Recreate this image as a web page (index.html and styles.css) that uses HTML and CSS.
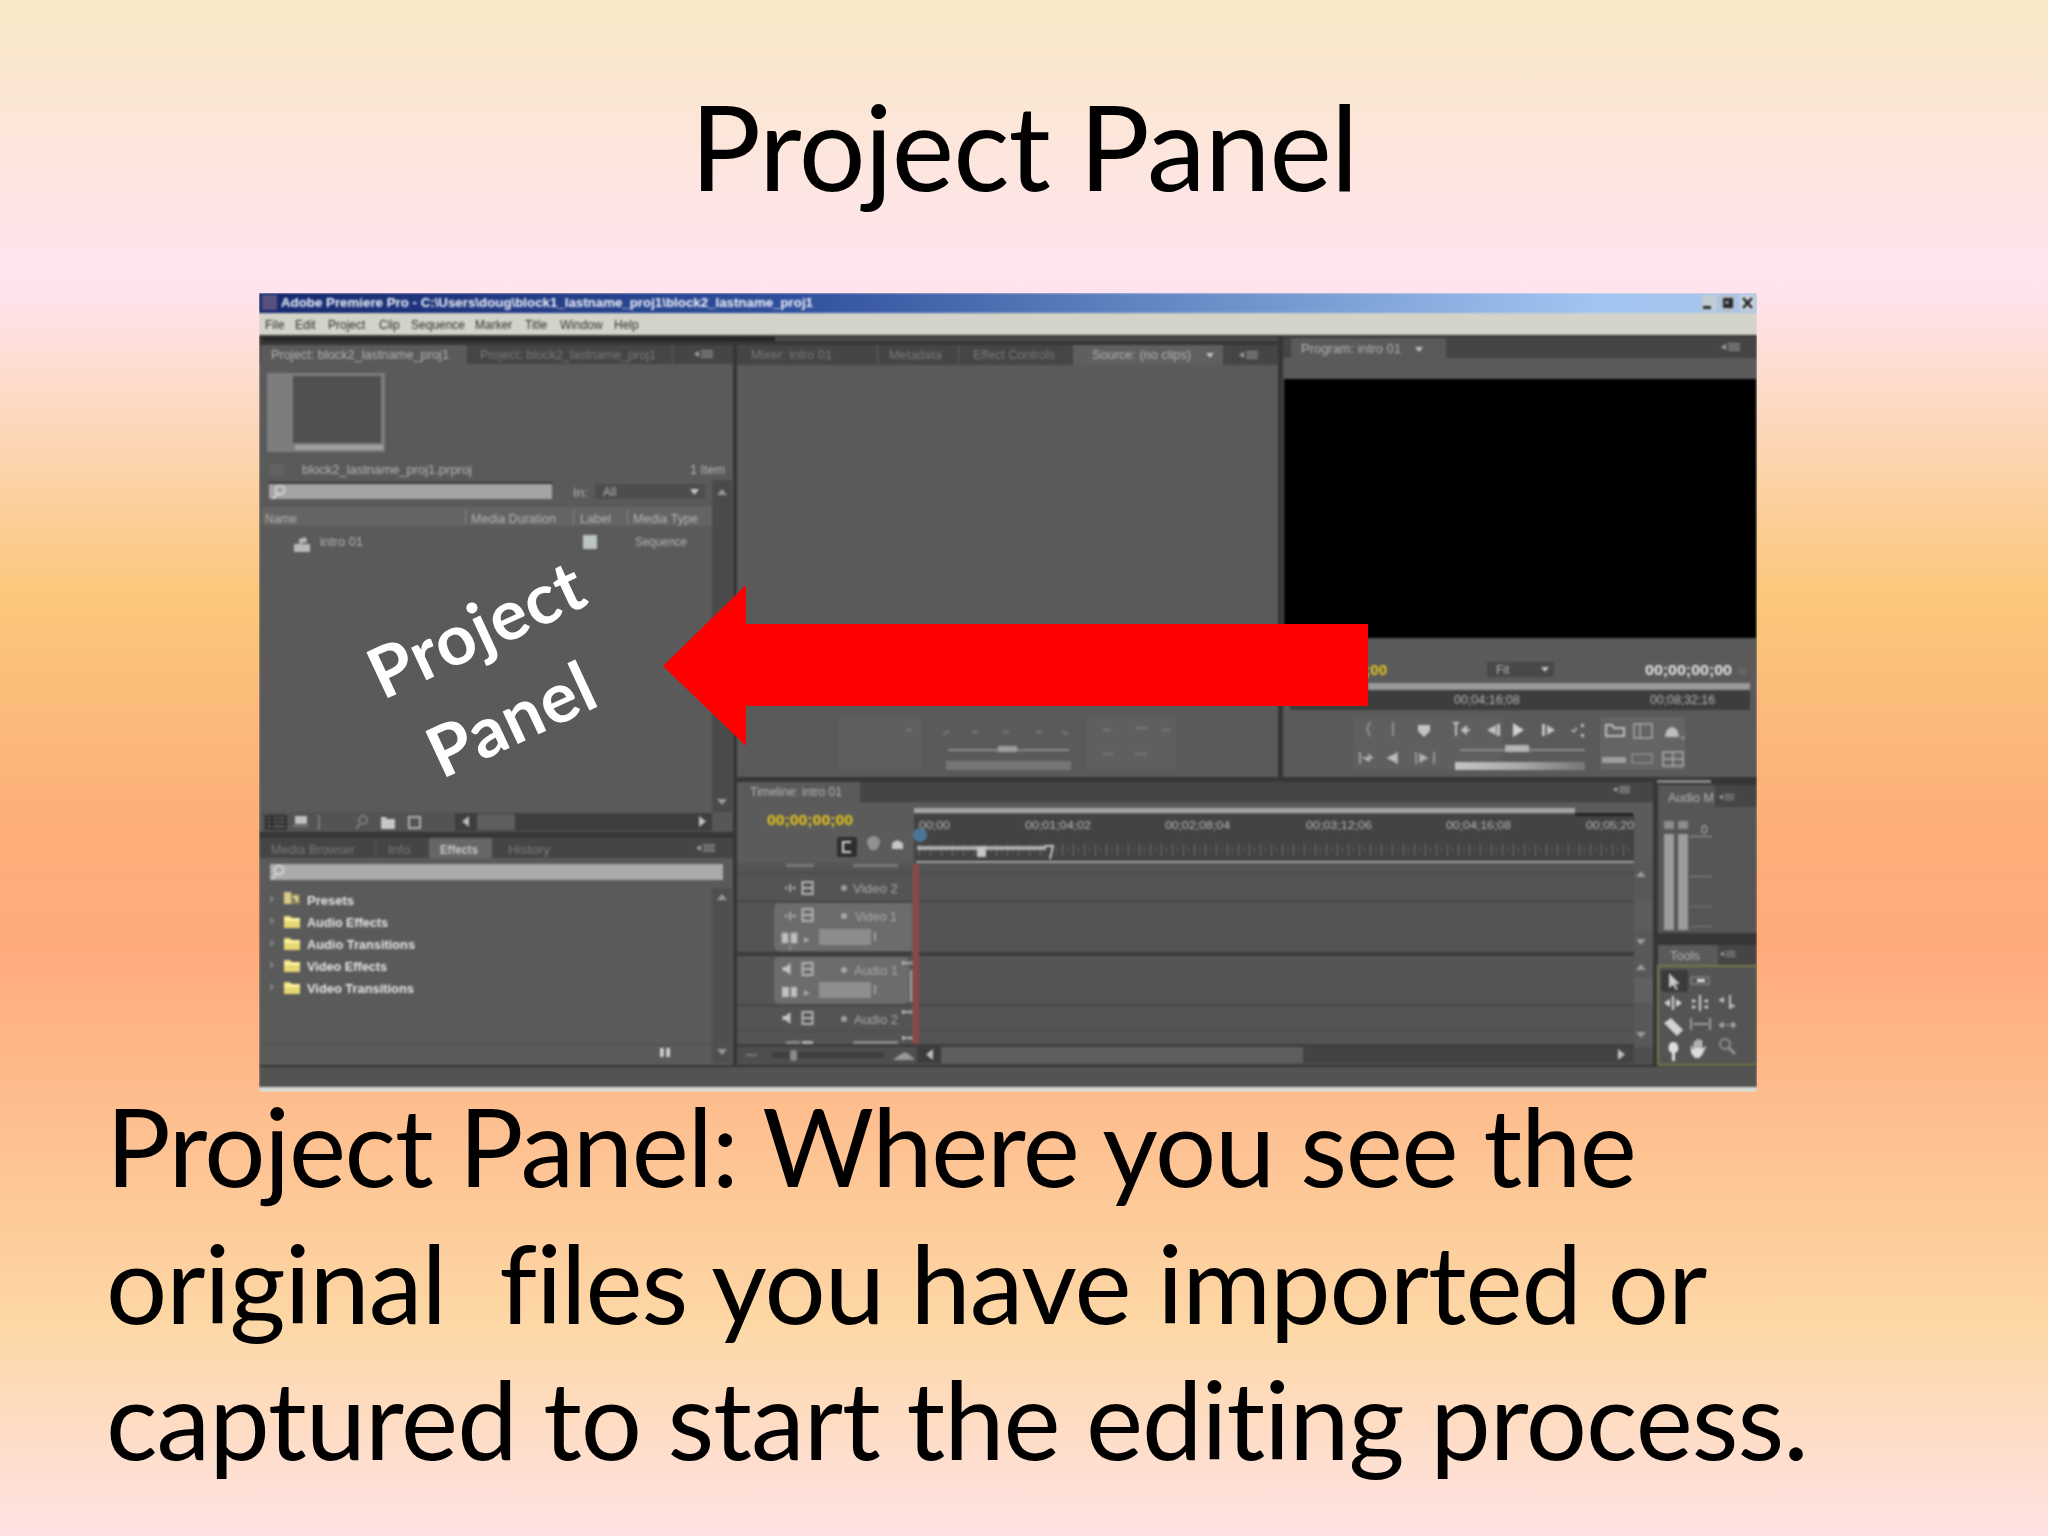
FILE: index.html
```html
<!DOCTYPE html>
<html lang="en">
<head>
<meta charset="utf-8">
<title>Project Panel</title>
<link rel="stylesheet" href="styles.css">
</head>
<body>
<main class="slide">
  <h1 class="slide-title">Project Panel</h1>
  <figure class="shot">
    <svg class="shot-svg" viewBox="259 293 1498 799" width="1498" height="799" xmlns="http://www.w3.org/2000/svg" role="img" aria-label="Adobe Premiere Pro workspace">
      <defs>
        <linearGradient id="titlebar" x1="0" x2="1" y1="0" y2="0">
          <stop offset="0" stop-color="#16296f"/>
          <stop offset="0.35" stop-color="#2f4f9c"/>
          <stop offset="0.6" stop-color="#6288c4"/>
          <stop offset="0.9" stop-color="#a3c6f2"/>
          <stop offset="1" stop-color="#a8c4e8"/>
        </linearGradient>
        <linearGradient id="shuttle" x1="0" x2="1" y1="0" y2="0">
          <stop offset="0" stop-color="#c4c4c4"/>
          <stop offset="0.5" stop-color="#a8a8a8"/>
          <stop offset="1" stop-color="#767676"/>
        </linearGradient>
        <pattern id="ticks" x="919" y="840" width="11" height="20" patternUnits="userSpaceOnUse">
          <rect x="0" y="4" width="1" height="12" fill="#707070"/>
          <rect x="5" y="7" width="1" height="6" fill="#5e5e5e"/>
        </pattern>
        <symbol id="folder" viewBox="0 0 18 16">
          <path d="M1 3h6l2 2h8v10H1z" fill="#e6d873"/>
          <path d="M1 5h16v3H1z" fill="#fff3a0"/>
        </symbol>
        <symbol id="presets" viewBox="0 0 18 16">
          <path d="M1 2h7v12H1z" fill="#d8cc88"/>
          <path d="M8 4h9v10H8z" fill="#8c8458"/>
          <path d="M10 6h5v6h-2V8h-3z" fill="#e8e2b4"/>
        </symbol>
        <symbol id="up" viewBox="0 0 12 8"><path d="M6 1l5 6H1z" fill="#9a9a9a"/></symbol>
        <symbol id="down" viewBox="0 0 12 8"><path d="M6 7L1 1h10z" fill="#9a9a9a"/></symbol>
        <symbol id="speaker" viewBox="0 0 14 14"><path d="M1 5h3l5-4v12L4 9H1z" fill="#c4c4c4"/></symbol>
        <symbol id="eye" viewBox="0 0 14 14"><path d="M1 7l3-2v4zM6 3h2v8H6zM9 6h4v2H9z" fill="#aaa"/></symbol>
        <symbol id="film" viewBox="0 0 12 14"><path d="M1 1h10v12H1z" fill="none" stroke="#b4b4b4" stroke-width="2"/><path d="M1 7h10" stroke="#b4b4b4" stroke-width="2"/></symbol>
        <symbol id="menu" viewBox="0 0 22 12"><path d="M1 6l5-3v6z" fill="#a0a0a0"/><path d="M8 2h12v2H8zM8 5h12v2H8zM8 8h12v2H8z" fill="#7e7e7e"/></symbol>
      </defs>

      <g class="soft">
        <!-- window chrome -->
        <rect class="bg-dark" x="259" y="293" width="1498" height="799"/>
        <rect x="259" y="293" width="1498" height="20" fill="url(#titlebar)"/>
        <rect x="262" y="295" width="15" height="15" fill="#59507f"/>
        <text class="t-title" x="281" y="307" textLength="532" lengthAdjust="spacingAndGlyphs">Adobe Premiere Pro - C:\Users\doug\block1_lastname_proj1\block2_lastname_proj1</text>
        <rect x="1702" y="295" width="15" height="16" fill="#c4ccd4"/>
        <rect x="1703" y="306" width="8" height="3" fill="#2a2a2a"/>
        <rect x="1720" y="295" width="15" height="16" fill="#b8c2cc"/>
        <rect x="1723" y="298" width="10" height="10" fill="#262626"/>
        <rect x="1725" y="301" width="4" height="3" fill="#8a939c"/>
        <rect x="1740" y="295" width="15" height="16" fill="#ccd4dc"/>
        <path d="M1743 298l9 10M1752 298l-9 10" stroke="#1c1c1c" stroke-width="2.500"/>
        <rect class="bg-menu" x="259" y="313" width="1498" height="22"/>
        <g class="t-menu">
          <text x="265" y="329">File</text>
          <text x="295" y="329">Edit</text>
          <text x="328" y="329">Project</text>
          <text x="379" y="329">Clip</text>
          <text x="411" y="329">Sequence</text>
          <text x="475" y="329">Marker</text>
          <text x="525" y="329">Title</text>
          <text x="560" y="329">Window</text>
          <text x="614" y="329">Help</text>
        </g>
        <rect x="262" y="337" width="513" height="4" fill="#262626"/>
        <rect x="775" y="337" width="503" height="4" fill="#4a4a4a"/>

        <!-- project panel -->
        <rect class="bg-panel" x="259" y="345" width="474" height="487"/>
        <rect class="bg-tabs" x="259" y="345" width="474" height="19"/>
        <rect class="bg-panel" x="261" y="345" width="206" height="19"/>
        <text class="t-mid" x="271" y="359" textLength="178" lengthAdjust="spacingAndGlyphs">Project: block2_lastname_proj1</text>
        <text class="t-dim" x="480" y="359" textLength="176" lengthAdjust="spacingAndGlyphs">Project: block2_lastname_proj1</text>
        <rect x="672" y="345" width="1" height="19" fill="#5c5c5c"/>
        <use href="#menu" x="693" y="348" width="22" height="12"/>
        <rect x="267" y="373" width="118" height="79" fill="#7d7d7d"/>
        <rect x="293" y="376" width="88" height="67" fill="#505050"/>
        <rect x="295" y="445" width="88" height="5" fill="#a0a0a0"/>
        <rect x="270" y="464" width="14" height="12" fill="#626262"/>
        <text class="t-mid" x="302" y="474" textLength="170" lengthAdjust="spacingAndGlyphs">block2_lastname_proj1.prproj</text>
        <text class="t-mid" x="690" y="474" textLength="35" lengthAdjust="spacingAndGlyphs">1 Item</text>
        <rect x="269" y="482" width="284" height="2" fill="#383838"/>
        <rect x="269" y="484" width="283" height="15" fill="#a4a4a4"/>
        <circle cx="280" cy="490" r="4.500" fill="none" stroke="#e0e0e0" stroke-width="1.500"/>
        <path d="M277 494l-4 5" stroke="#e0e0e0" stroke-width="1.500"/>
        <text class="t-mid" x="573" y="497" textLength="15" lengthAdjust="spacingAndGlyphs">In:</text>
        <rect x="595" y="484" width="110" height="15" fill="#4d4d4d"/>
        <text class="t-mid" x="603" y="496">All</text>
        <path d="M690 489h9l-4.500 6z" fill="#c8c8c8"/>
        <rect x="712" y="480" width="20" height="332" fill="#4a4a4a"/>
        <use href="#up" x="716" y="488" width="12" height="8"/>
        <use href="#down" x="716" y="798" width="12" height="8"/>
        <rect x="262" y="507" width="450" height="19" fill="#646464"/>
        <text class="t-mid" x="265" y="523">Name</text>
        <rect x="465" y="510" width="1" height="14" fill="#8a8a8a"/>
        <text class="t-mid" x="471" y="523" textLength="85" lengthAdjust="spacingAndGlyphs">Media Duration</text>
        <rect x="573" y="510" width="1" height="14" fill="#8a8a8a"/>
        <text class="t-mid" x="580" y="523" textLength="31" lengthAdjust="spacingAndGlyphs">Label</text>
        <rect x="627" y="510" width="1" height="14" fill="#8a8a8a"/>
        <text class="t-mid" x="633" y="523" textLength="65" lengthAdjust="spacingAndGlyphs">Media Type</text>
        <path d="M294 544h16v8h-16zM299 539l7-2 1 5-8 2z" fill="#b8b8b8"/>
        <text class="t-mid" x="320" y="546" textLength="43" lengthAdjust="spacingAndGlyphs">intro 01</text>
        <rect x="583" y="535" width="14" height="14" fill="#bcc5c1"/>
        <text class="t-mid" x="635" y="546" textLength="52" lengthAdjust="spacingAndGlyphs">Sequence</text>

        <!-- project toolbar -->
        <rect x="262" y="812" width="193" height="20" fill="#535353"/>
        <path d="M266 816h20v13h-20z M266 820h20 M266 824h20 M272 816v13" fill="none" stroke="#262626" stroke-width="1.500"/>
        <rect x="295" y="816" width="12" height="8" fill="#c0c0c0"/>
        <rect x="293" y="825" width="16" height="2" fill="#777"/>
        <rect x="318" y="815" width="2" height="15" fill="#7a7a7a"/>
        <circle cx="363" cy="820" r="4" fill="none" stroke="#8a8a8a" stroke-width="1.500"/>
        <path d="M360 824l-4 5" stroke="#8a8a8a" stroke-width="1.500"/>
        <path d="M381 817h5l1 2h8v10h-14z" fill="#c8c8c8"/>
        <rect x="409" y="817" width="11" height="11" fill="none" stroke="#b0b0b0" stroke-width="2"/>
        <rect x="455" y="813" width="257" height="18" fill="#3e3e3e"/>
        <path d="M469 816v11l-7-5.500z" fill="#bdbdbd"/>
        <rect x="477" y="814" width="38" height="16" fill="#5e5e5e"/>
        <path d="M699 816v11l7-5.500z" fill="#c0c0c0"/>
        <rect x="712" y="812" width="21" height="20" fill="#575757"/>

        <!-- effects panel -->
        <rect class="bg-panel" x="259" y="838" width="474" height="227"/>
        <rect class="bg-tabs" x="259" y="838" width="474" height="20"/>
        <text class="t-dim" x="271" y="854" textLength="84" lengthAdjust="spacingAndGlyphs">Media Browser</text>
        <rect x="375" y="840" width="1" height="18" fill="#5d5d5d"/>
        <text class="t-dim" x="388" y="854" textLength="22" lengthAdjust="spacingAndGlyphs">Info</text>
        <rect x="429" y="838" width="63" height="20" fill="#666"/>
        <text class="t-bright" x="440" y="854" textLength="38" lengthAdjust="spacingAndGlyphs">Effects</text>
        <text class="t-dim" x="508" y="854" textLength="42" lengthAdjust="spacingAndGlyphs">History</text>
        <use href="#menu" x="695" y="842" width="22" height="12"/>
        <rect x="270" y="864" width="453" height="16" fill="#ababab"/>
        <circle cx="279" cy="870" r="4.500" fill="none" stroke="#e0e0e0" stroke-width="1.500"/>
        <path d="M276 874l-4 5" stroke="#e0e0e0" stroke-width="1.500"/>
        <rect x="712" y="888" width="20" height="175" fill="#4f4f4f"/>
        <use href="#up" x="716" y="893" width="12" height="8"/>
        <use href="#down" x="716" y="1048" width="12" height="8"/>
        <path d="M270 895l5 4-5 4zM270 917l5 4-5 4zM270 939l5 4-5 4zM270 961l5 4-5 4zM270 983l5 4-5 4z" fill="#7c7c7c"/>
        <use href="#presets" x="283" y="890" width="18" height="16"/>
        <use href="#folder" x="283" y="913" width="18" height="16"/>
        <use href="#folder" x="283" y="935" width="18" height="16"/>
        <use href="#folder" x="283" y="957" width="18" height="16"/>
        <use href="#folder" x="283" y="979" width="18" height="16"/>
        <g class="t-tree">
          <text x="307" y="905" textLength="47" lengthAdjust="spacingAndGlyphs">Presets</text>
          <text x="307" y="927" textLength="81" lengthAdjust="spacingAndGlyphs">Audio Effects</text>
          <text x="307" y="949" textLength="108" lengthAdjust="spacingAndGlyphs">Audio Transitions</text>
          <text x="307" y="971" textLength="80" lengthAdjust="spacingAndGlyphs">Video Effects</text>
          <text x="307" y="993" textLength="107" lengthAdjust="spacingAndGlyphs">Video Transitions</text>
        </g>
        <rect x="262" y="1044" width="450" height="1" fill="#4e4e4e"/>
        <path d="M660 1048h10v9h-10z" fill="#d0d0d0"/>
        <rect x="664" y="1048" width="2" height="9" fill="#444"/>

        <!-- source panel -->
        <rect class="bg-panel" x="737" y="345" width="541" height="432"/>
        <rect class="bg-tabs" x="737" y="345" width="541" height="20"/>
        <text class="t-dim" x="751" y="359" textLength="81" lengthAdjust="spacingAndGlyphs">Mixer: intro 01</text>
        <rect x="877" y="346" width="1" height="18" fill="#5f5f5f"/>
        <text class="t-dim" x="889" y="359" textLength="53" lengthAdjust="spacingAndGlyphs">Metadata</text>
        <rect x="958" y="346" width="1" height="18" fill="#5f5f5f"/>
        <text class="t-dim" x="973" y="359" textLength="82" lengthAdjust="spacingAndGlyphs">Effect Controls</text>
        <rect x="1073" y="345" width="150" height="20" fill="#5f5f5f"/>
        <text class="t-mid" x="1092" y="359" textLength="99" lengthAdjust="spacingAndGlyphs">Source: (no clips)</text>
        <path d="M1206 353h8l-4 5z" fill="#c4c4c4"/>
        <use href="#menu" x="1238" y="349" width="22" height="12"/>
        <rect x="839" y="717" width="82" height="52" fill="#5f5f5f"/>
        <rect x="1087" y="717" width="89" height="52" fill="#5f5f5f"/>
        <path d="M943 734l6-3M972 732h6M1003 732h6M1036 732h6M1062 731l6 4M1103 730h8M1135 728h12M1162 730h8M1103 754h10M1135 754h12M906 730h6" stroke="#717171" stroke-width="3"/>
        <rect x="948" y="749" width="121" height="2" fill="#8a8a8a"/>
        <rect x="998" y="746" width="19" height="6" fill="#9e9e9e"/>
        <rect x="946" y="761" width="125" height="9" fill="#757575"/>

        <!-- program panel -->
        <rect class="bg-panel" x="1283" y="337" width="474" height="440"/>
        <rect class="bg-tabs" x="1283" y="337" width="474" height="21"/>
        <rect class="bg-panel" x="1291" y="338" width="155" height="20"/>
        <text class="t-mid" x="1301" y="353" textLength="100" lengthAdjust="spacingAndGlyphs">Program: intro 01</text>
        <path d="M1415 347h8l-4 5z" fill="#c4c4c4"/>
        <use href="#menu" x="1720" y="341" width="22" height="12"/>
        <rect x="1284" y="379" width="472" height="259" fill="#000"/>
        <text class="t-yellow t-end" x="1387" y="675">00;00;00;00</text>
        <rect x="1487" y="662" width="67" height="15" fill="#484848"/>
        <text class="t-mid" x="1496" y="674">Fit</text>
        <path d="M1541 667h8l-4 5z" fill="#c4c4c4"/>
        <text class="t-time" x="1645" y="675" textLength="87" lengthAdjust="spacingAndGlyphs">00;00;00;00</text>
        <text class="t-dim" x="1739" y="674">u</text>
        <rect x="1368" y="683" width="382" height="7" fill="#999"/>
        <rect x="1290" y="690" width="460" height="20" fill="#3d3d3d"/>
        <text class="t-mid" x="1454" y="704" textLength="66" lengthAdjust="spacingAndGlyphs">00;04;16;08</text>
        <text class="t-mid" x="1650" y="704" textLength="65" lengthAdjust="spacingAndGlyphs">00;08;32;16</text>
        <rect x="1353" y="717" width="150" height="53" fill="#5f5f5f"/>
        <rect x="1600" y="717" width="85" height="53" fill="#646464"/>
        <path d="M1370 722l-3 7 3 7M1393 722v14" fill="none" stroke="#909090" stroke-width="2"/>
        <path d="M1418 725h12v6l-6 6-6-6z" fill="#c4c4c4"/>
        <path d="M1453 723h6M1456 723v13M1462 730h8M1462 730l4-3v6z" fill="none" stroke="#c0c0c0" stroke-width="2"/>
        <path d="M1496 725v10l-9-5zM1497 724h3v12h-3z" fill="#c4c4c4"/>
        <path d="M1513 723v14l11-7z" fill="#cfcfcf"/>
        <path d="M1542 724h3v12h-3zM1547 725v10l8-5z" fill="#c4c4c4"/>
        <path d="M1570 730h8l-3-3v6zM1581 724h3v3h-3zM1581 734h3v3h-3z" fill="#c0c0c0"/>
        <path d="M1606 725h6l2 3h10v8h-18z" fill="none" stroke="#bcbcbc" stroke-width="2"/>
        <path d="M1634 724h18v14h-18zM1640 724v14" fill="none" stroke="#a8a8a8" stroke-width="1.500"/>
        <path d="M1665 737a7 10 0 0 1 14 0z" fill="#bdbdbd"/>
        <circle cx="1683" cy="738" r="2" fill="#8c8c8c"/>
        <path d="M1360 752v12M1364 758h8l-3-3v6zM1388 758l8-4v8zM1397 752v12" fill="#c4c4c4" stroke="#b8b8b8" stroke-width="1.500"/>
        <path d="M1416 752v12M1420 754v8l7-4zM1434 752v12" fill="#b8b8b8" stroke="#aaa" stroke-width="1.500"/>
        <rect x="1460" y="749" width="125" height="2" fill="#8b8b8b"/>
        <rect x="1505" y="745" width="24" height="7" fill="#b4b4b4"/>
        <rect x="1455" y="762" width="130" height="8" fill="url(#shuttle)"/>
        <path d="M1602 757h24v6h-24z" fill="#a0a0a0"/>
        <path d="M1632 754h20v9h-20z" fill="none" stroke="#8d8d8d" stroke-width="1.500"/>
        <path d="M1663 752h20v14h-20zM1673 752v14M1663 759h20" fill="none" stroke="#aaa" stroke-width="1.500"/>

        <!-- timeline panel -->
        <rect x="737" y="782" width="916" height="283" fill="#545454"/>
        <rect class="bg-tabs" x="737" y="782" width="916" height="20"/>
        <rect class="bg-panel" x="737" y="782" width="123" height="21"/>
        <text class="t-mid" x="750" y="796" textLength="92" lengthAdjust="spacingAndGlyphs">Timeline: intro 01</text>
        <use href="#menu" x="1612" y="784" width="20" height="11"/>
        <rect x="737" y="803" width="916" height="60" fill="#5b5b5b"/>
        <text class="t-yellow" x="767" y="825" textLength="86" lengthAdjust="spacingAndGlyphs">00;00;00;00</text>
        <rect x="837" y="837" width="20" height="20" rx="2" fill="#2e2e2e"/>
        <path d="M851 842h-8v10h8" fill="none" stroke="#d4d4d4" stroke-width="2"/>
        <path d="M867 842a6.500 6 0 0 1 13 0c0 4-3 5-3 8h-7c0-3-3-4-3-8z" fill="#929292"/>
        <path d="M892 843l5-3 6 3v6h-11z" fill="#c8c8c8"/>
        <rect x="914" y="808" width="661" height="5" fill="#a4a4a4"/>
        <rect x="914" y="814" width="720" height="50" fill="#434343"/>
        <rect x="1575" y="813" width="58" height="3" fill="#222"/>
        <g class="t-ruler">
          <text x="919" y="829" textLength="31" lengthAdjust="spacingAndGlyphs">00;00</text>
          <text x="1025" y="829" textLength="66" lengthAdjust="spacingAndGlyphs">00;01;04;02</text>
          <text x="1165" y="829" textLength="65" lengthAdjust="spacingAndGlyphs">00;02;08;04</text>
          <text x="1306" y="829" textLength="66" lengthAdjust="spacingAndGlyphs">00;03;12;06</text>
          <text x="1446" y="829" textLength="65" lengthAdjust="spacingAndGlyphs">00;04;16;08</text>
          <text x="1586" y="829" textLength="48" lengthAdjust="spacingAndGlyphs">00;05;20</text>
        </g>
        <rect x="914" y="840" width="720" height="20" fill="url(#ticks)"/>
        <rect x="917" y="846" width="129" height="4" fill="#adadad"/>
        <rect x="977" y="846" width="9" height="11" fill="#c4c4c4"/>
        <path d="M1044 846h9l-3 13" fill="none" stroke="#c4c4c4" stroke-width="2"/>
        <circle cx="920" cy="835" r="7" fill="#4c7598"/>
        <rect x="916" y="861" width="718" height="2" fill="#a8a8a8"/>

        <rect x="737" y="872" width="897" height="2" fill="#4c4c4c"/>
        <rect x="737" y="900" width="897" height="3" fill="#4b4b4b"/>
        <rect x="737" y="952" width="916" height="4" fill="#3c3c3c"/>
        <rect x="737" y="1004" width="897" height="3" fill="#4b4b4b"/>
        <rect x="737" y="1030" width="897" height="1" fill="#4b4b4b"/>

        <rect x="774" y="903" width="142" height="48" rx="5" fill="#6c6c6c"/>
        <rect x="774" y="957" width="135" height="47" rx="5" fill="#6c6c6c"/>
        <use href="#eye" x="783" y="881" width="14" height="14"/>
        <use href="#film" x="801" y="881" width="13" height="14"/>
        <circle cx="844" cy="888" r="3" fill="#a0a0a0"/>
        <text class="t-track" x="853" y="893" textLength="45" lengthAdjust="spacingAndGlyphs">Video 2</text>
        <use href="#eye" x="783" y="909" width="14" height="14"/>
        <use href="#film" x="801" y="908" width="13" height="14"/>
        <circle cx="844" cy="916" r="3" fill="#a8a8a8"/>
        <text class="t-track" x="855" y="921" textLength="42" lengthAdjust="spacingAndGlyphs">Video 1</text>
        <path d="M782 933h6v10h-6zM791 933h6v10h-6zM790 945v6" fill="#c0c0c0" stroke="#aaa"/>
        <path d="M804 937l6 3-6 3z" fill="#a8a8a8"/>
        <rect x="819" y="929" width="52" height="16" fill="#8c8c8c"/>
        <rect x="874" y="932" width="2" height="9" fill="#a0a0a0"/>
        <use href="#speaker" x="781" y="962" width="15" height="14"/>
        <use href="#film" x="801" y="962" width="13" height="14"/>
        <circle cx="844" cy="970" r="3" fill="#a8a8a8"/>
        <text class="t-track" x="854" y="975" textLength="44" lengthAdjust="spacingAndGlyphs">Audio 1</text>
        <path d="M903 963h9M903 961v4M912 961v4M911 970v32" fill="none" stroke="#c0c0c0" stroke-width="1.500"/>
        <path d="M782 987h15v10h-15z" fill="#c0c0c0"/>
        <rect x="789" y="987" width="2" height="10" fill="#6c6c6c"/>
        <path d="M804 990l6 3-6 3z" fill="#a8a8a8"/>
        <rect x="819" y="982" width="52" height="16" fill="#8e8e8e"/>
        <rect x="874" y="985" width="2" height="9" fill="#a0a0a0"/>
        <use href="#speaker" x="781" y="1011" width="15" height="14"/>
        <use href="#film" x="801" y="1011" width="13" height="14"/>
        <circle cx="844" cy="1019" r="3" fill="#a0a0a0"/>
        <text class="t-track" x="854" y="1024" textLength="44" lengthAdjust="spacingAndGlyphs">Audio 2</text>
        <path d="M903 1012h9M903 1010v4M912 1010v4M903 1038h9M903 1036v4M912 1036v4" fill="none" stroke="#d0d0d0" stroke-width="1.500"/>
        <rect x="786" y="1041" width="14" height="3" fill="#888"/>
        <rect x="802" y="1041" width="11" height="3" fill="#b0b0b0"/>
        <rect x="853" y="1041" width="45" height="3" fill="#8a8a8a"/>
        <rect x="786" y="864" width="28" height="3" fill="#7a7a7a"/>
        <rect x="853" y="864" width="45" height="3" fill="#7a7a7a"/>

        <rect x="912" y="864" width="7" height="181" fill="#864a4a"/>

        <rect x="737" y="1044" width="916" height="3" fill="#3e3e3e"/>
        <rect x="737" y="1047" width="916" height="18" fill="#4e4e4e"/>
        <rect x="746" y="1054" width="11" height="2" fill="#777"/>
        <rect x="771" y="1052" width="113" height="6" rx="3" fill="#3f3f3f"/>
        <rect x="790" y="1050" width="7" height="11" rx="3" fill="#8a8a8a"/>
        <path d="M893 1060l8-6 4-2 5 3 5 5z" fill="#989898"/>
        <rect x="917" y="1046" width="24" height="17" fill="#3c3c3c"/>
        <path d="M933 1049v11l-7-5.500z" fill="#c0c0c0"/>
        <rect x="941" y="1047" width="362" height="16" fill="#5e5e5e"/>
        <rect x="1303" y="1047" width="331" height="16" fill="#434343"/>
        <path d="M1618 1049v11l7-5.500z" fill="#c0c0c0"/>
        <rect x="1634" y="863" width="19" height="184" fill="#585858"/>
        <use href="#up" x="1635" y="870" width="12" height="8"/>
        <rect x="1634" y="900" width="19" height="30" fill="#5c5c5c"/>
        <use href="#down" x="1635" y="938" width="12" height="8"/>
        <use href="#up" x="1635" y="963" width="12" height="8"/>
        <rect x="1634" y="978" width="19" height="24" fill="#606060"/>
        <use href="#down" x="1635" y="1031" width="12" height="8"/>

        <!-- audio meter panel -->
        <rect x="1658" y="785" width="99" height="148" fill="#565656"/>
        <rect x="1657" y="780" width="54" height="3" fill="#888"/>
        <rect class="bg-tabs" x="1715" y="785" width="42" height="22"/>
        <text class="t-mid" x="1668" y="802" textLength="46" lengthAdjust="spacingAndGlyphs">Audio M</text>
        <use href="#menu" x="1718" y="792" width="18" height="10"/>
        <rect x="1664" y="821" width="10" height="8" fill="#8c8c8c"/>
        <rect x="1678" y="821" width="10" height="8" fill="#8c8c8c"/>
        <rect x="1664" y="834" width="10" height="96" fill="#9c9c9c"/>
        <rect x="1678" y="834" width="10" height="96" fill="#9c9c9c"/>
        <text class="t-mid" x="1701" y="834">0</text>
        <rect x="1690" y="836" width="22" height="1" fill="#9c9c9c"/>
        <rect x="1690" y="876" width="22" height="1" fill="#8a8a8a"/>
        <rect x="1690" y="906" width="22" height="1" fill="#7a7a7a"/>
        <rect x="1690" y="926" width="22" height="1" fill="#7a7a7a"/>

        <!-- tools panel -->
        <rect x="1658" y="945" width="99" height="120" fill="#545454"/>
        <rect class="bg-panel" x="1658" y="945" width="60" height="22"/>
        <rect class="bg-tabs" x="1718" y="945" width="39" height="20"/>
        <text class="t-mid" x="1670" y="960" textLength="30" lengthAdjust="spacingAndGlyphs">Tools</text>
        <use href="#menu" x="1719" y="949" width="18" height="10"/>
        <path d="M1658 1065v-99h60M1718 966h39v99h-99" fill="none" stroke="#77774a" stroke-width="2"/>
        <rect x="1661" y="970" width="27" height="22" rx="3" fill="#3a3a3a"/>
        <path d="M1669 973v15l4-3 3 5 2-1-3-5h5z" fill="#c8c8c8"/>
        <path d="M1691 977h18v7h-18z" fill="none" stroke="#999" stroke-width="1"/>
        <rect x="1697" y="979" width="8" height="3" fill="#e0e0e0"/>
        <path d="M1664 1003l6-4v8zM1682 1003l-6-4v8zM1672 996h2v14h-2z" fill="#d4d4d4"/>
        <path d="M1692 999l5 2-5 2zM1708 999l-5 2 5 2zM1692 1005l5 2-5 2zM1708 1005l-5 2 5 2zM1699 995h2v16h-2z" fill="#cfcfcf"/>
        <path d="M1718 1000l6-3v6zM1729 995h2v14h-2zM1736 1006l-5-2v4z" fill="#bdbdbd"/>
        <path d="M1664 1023l7-5 12 12-6 6z" fill="#d4d4d4"/>
        <path d="M1691 1018v12M1710 1018v12M1693 1024h15" fill="none" stroke="#b4b4b4" stroke-width="1.500"/>
        <path d="M1719 1025h17M1719 1025l4-3v6zM1736 1025l-4-3v6z" fill="#a0a0a0" stroke="#a8a8a8"/>
        <path d="M1673 1042c5 0 6 5 5 9l-3 2v8h-3v-8l-3-2c-1-4 0-9 4-9z" fill="#e0e0e0"/>
        <path d="M1691 1044l3 6v-9h2v7h1v-9h2v9h1v-8h2v9l3-3 1 1-4 8-3 3h-4l-4-5z" fill="#dcdcdc"/>
        <circle cx="1725" cy="1044" r="5" fill="none" stroke="#909090" stroke-width="2"/>
        <path d="M1729 1048l6 6" stroke="#909090" stroke-width="3"/>

        <rect x="259" y="1067" width="1498" height="20" fill="#535353"/>
        <rect x="259" y="1087" width="1498" height="5" fill="#dadad4"/>
      </g>

      <polygon class="arrow" points="663,666 746,585 746,624 1368,624 1368,706 746,706 746,746"/>
      <g class="label">
        <text transform="translate(487 652) rotate(-25)">Project</text>
        <text transform="translate(522 742) rotate(-25)">Panel</text>
      </g>
    </svg>
  </figure>
  <div class="slide-body">
    <p class="line line-1">Project Panel: Where you see the</p>
    <p class="line">original  files you have imported or</p>
    <p class="line">captured to start the editing process.</p>
  </div>
</main>
</body>
</html>
```

FILE: styles.css
```css
html, body {
  margin: 0;
  padding: 0;
}

body {
  width: 2048px;
  height: 1536px;
  overflow: hidden;
}

.slide {
  width: 2048px;
  height: 1536px;
  display: flex;
  flex-direction: column;
  background: linear-gradient(180deg,
    #f9e8c6 0%,
    #ffe4f0 18.5%,
    #fbc87c 38.5%,
    #fdae78 54%,
    #ffab7d 62%,
    #fdd7a5 86%,
    #ffe2e4 100%);
  color: #000;
  font-family: Lato, "Open Sans", sans-serif;
}

.slide-title {
  margin: 0;
  height: 293px;
  box-sizing: border-box;
  padding-top: 75px;
  font-size: 118px;
  line-height: 142px;
  font-weight: 400;
  text-align: center;
  letter-spacing: -1px;
}

.shot {
  margin: 0 0 0 259px;
  width: 1498px;
  height: 799px;
}

.shot-svg {
  display: block;
}

.slide-body {
  margin: -15px 0 0 106px;
}

.line {
  margin: 0;
  font-size: 108px;
  line-height: 136.5px;
  white-space: pre;
  letter-spacing: -1px;
}

.line-1 {
  letter-spacing: -1.3px;
}

/* screenshot, softened like the compressed capture */
.soft {
  filter: blur(0.8px);
  font-family: "Liberation Sans", Arial, sans-serif;
  font-size: 12px;
}

.bg-dark { fill: #363636; }
.bg-menu { fill: #d4d3c9; }
.bg-panel { fill: #5a5a5a; }
.bg-tabs { fill: #454545; }

.t-title { fill: #f2f4fa; font-size: 12px; font-weight: 700; }
.t-menu { fill: #2f2f2f; font-size: 12px; }
.t-mid { fill: #b4b4b4; font-size: 12px; }
.t-dim { fill: #7a7a7a; font-size: 12px; }
.t-bright { fill: #c8c8c8; font-size: 12px; font-weight: 700; }
.t-tree { fill: #e6e6e6; font-size: 12px; font-weight: 700; }
.t-yellow { fill: #e8c61c; font-size: 15px; font-weight: 700; }
.t-end { text-anchor: end; }
.t-time { fill: #e6e6e6; font-size: 15px; font-weight: 700; }
.t-ruler { fill: #b8b8b8; font-size: 11px; }
.t-track { fill: #a8a8a8; font-size: 13px; }

.arrow { fill: #ff0000; }

.label {
  fill: #fff;
  font-family: Lato, "Open Sans", sans-serif;
  font-size: 70px;
  font-weight: 700;
  text-anchor: middle;
  letter-spacing: 1px;
}
```
